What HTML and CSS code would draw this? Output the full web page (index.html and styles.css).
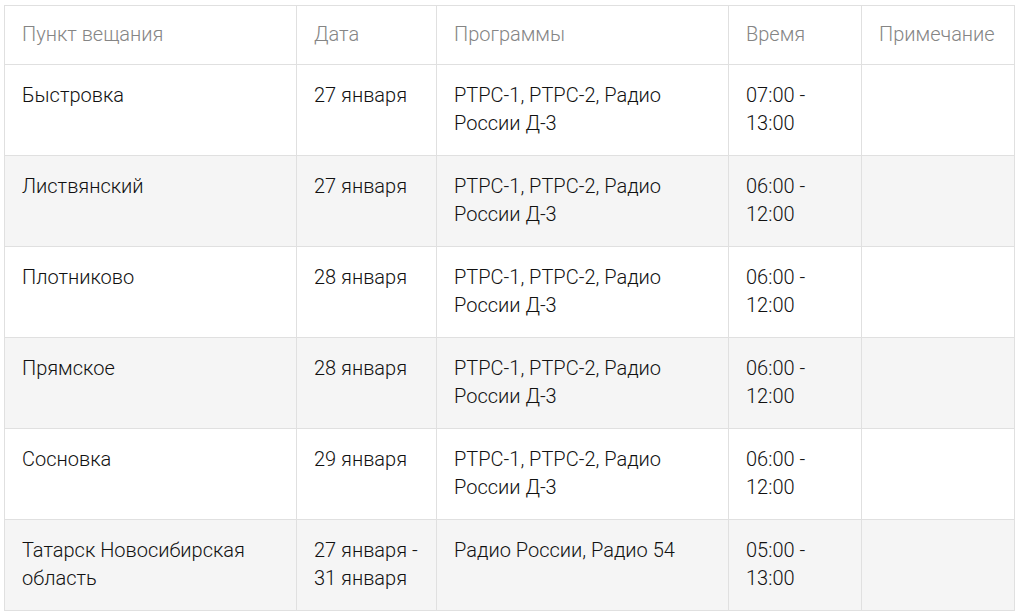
FILE: index.html
```html
<!DOCTYPE html>
<html lang="ru">
<head>
<meta charset="utf-8">
<link rel="stylesheet" href="styles.css">
</head>
<body>
<table class="schedule">
  <colgroup>
    <col class="c1"><col class="c2"><col class="c3"><col class="c4"><col class="c5">
  </colgroup>
  <thead>
    <tr><th>Пункт вещания</th><th>Дата</th><th>Программы</th><th>Время</th><th>Примечание</th></tr>
  </thead>
  <tbody>
    <tr><td>Быстровка</td><td>27 января</td><td>РТРС-1, РТРС-2, Радио России Д-3</td><td>07:00 - 13:00</td><td></td></tr>
    <tr><td>Листвянский</td><td>27 января</td><td>РТРС-1, РТРС-2, Радио России Д-3</td><td>06:00 - 12:00</td><td></td></tr>
    <tr><td>Плотниково</td><td>28 января</td><td>РТРС-1, РТРС-2, Радио России Д-3</td><td>06:00 - 12:00</td><td></td></tr>
    <tr><td>Прямское</td><td>28 января</td><td>РТРС-1, РТРС-2, Радио России Д-3</td><td>06:00 - 12:00</td><td></td></tr>
    <tr><td>Сосновка</td><td>29 января</td><td>РТРС-1, РТРС-2, Радио России Д-3</td><td>06:00 - 12:00</td><td></td></tr>
    <tr><td>Татарск Новосибирская область</td><td>27 января - 31 января</td><td>Радио России, Радио 54</td><td>05:00 - 13:00</td><td></td></tr>
  </tbody>
</table>
</body>
</html>
```
FILE: styles.css
```css
html, body {
  margin: 0;
  padding: 0;
  background: #ffffff;
}
body {
  padding: 5px 0 0 4px;
  font-family: Roboto, "Liberation Sans", sans-serif;
}
.schedule {
  border-collapse: collapse;
  table-layout: fixed;
  width: 1010px;
  font-size: 20px;
  font-weight: 300;
  line-height: 28px;
  color: #111111;
}
.c1 { width: 292px; }
.c2 { width: 140px; }
.c3 { width: 292px; }
.c4 { width: 133px; }
.c5 { width: 153px; }
.schedule th,
.schedule td {
  border: 1px solid #e0e0e0;
  text-align: left;
  vertical-align: top;
  padding: 16px 12px 18px 17px;
}
.schedule th {
  font-weight: 300;
  color: #858585;
  padding: 14px 12px 16px 17px;
}
.schedule tbody tr:nth-child(even) td {
  background: #f5f5f5;
}
```
